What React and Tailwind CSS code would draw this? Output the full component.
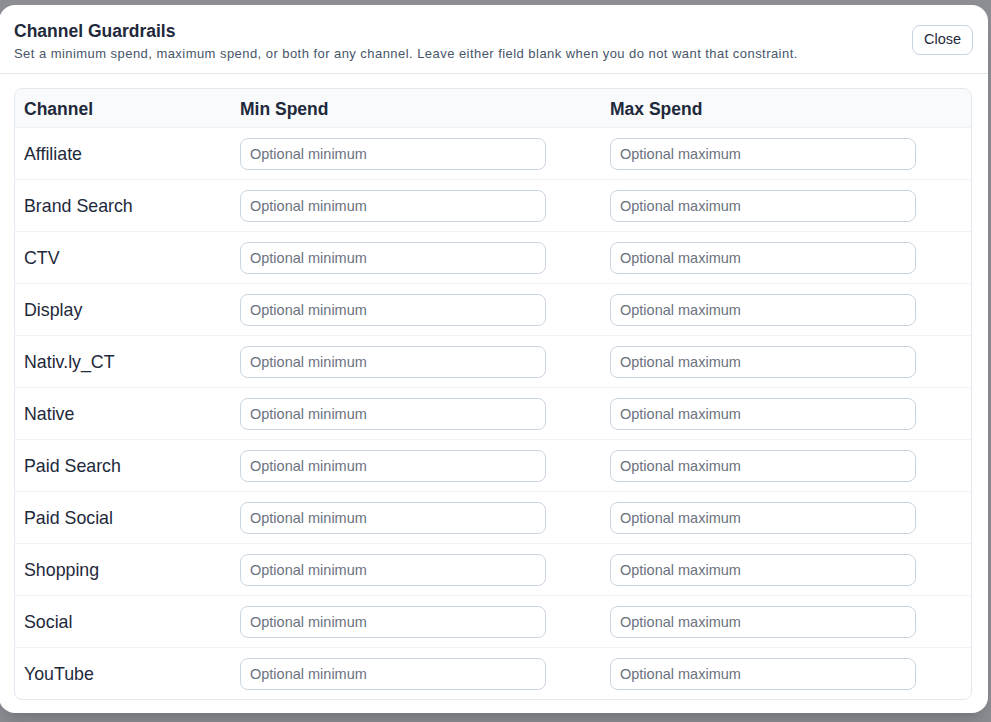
import React from 'react';

const channels = [
  'Affiliate',
  'Brand Search',
  'CTV',
  'Display',
  'Nativ.ly_CT',
  'Native',
  'Paid Search',
  'Paid Social',
  'Shopping',
  'Social',
  'YouTube',
];

export default function App() {
  return (
    <div
      className="h-[722px] w-[991px] overflow-hidden bg-[#8c8e94] pt-[5px]"
      style={{ fontFamily: '"Liberation Sans", Arial, sans-serif' }}
    >
      <div className="relative ml-[-1px] h-[708px] w-[989px] rounded-2xl bg-white shadow-xl">
        {/* Header */}
        <div className="flex h-[69px] items-start justify-between border-b border-[#e2e8f0] pl-[15px] pr-[15px] pt-[16px]">
          <div>
            <h2 className="text-[17.5px] font-bold leading-[20px] text-[#1e293b]">Channel Guardrails</h2>
            <p className="mt-[5px] text-[13px] leading-[16px] tracking-[0.45px] text-[#475569]">
              Set a minimum spend, maximum spend, or both for any channel. Leave either field blank when you do not want that constraint.
            </p>
          </div>
          <button className="mt-[4px] h-[30px] w-[61px] rounded-lg border border-[#cbd5e1] bg-white text-[14.5px] text-[#1e293b]">
            Close
          </button>
        </div>

        {/* Table */}
        <div className="ml-[15px] mt-[14px] w-[958px] overflow-hidden rounded-lg border border-[#e2e8f0]">
          <div className="grid h-[38px] grid-cols-[215px_370px_1fr] items-center bg-[#f8fafc] pt-[2px] text-[17.5px] font-bold text-[#1e293b]">
            <div className="px-[9px]">Channel</div>
            <div className="px-[10px]">Min Spend</div>
            <div className="px-[10px]">Max Spend</div>
          </div>
          {channels.map((name) => (
            <div
              key={name}
              className="grid h-[52px] grid-cols-[215px_370px_1fr] items-center border-t border-[#eef1f5] text-[17.8px] text-[#1e293b]"
            >
              <div className="px-[9px] pt-[2px]">{name}</div>
              <div className="px-[10px]">
                <input
                  type="text"
                  placeholder="Optional minimum"
                  className="h-[32px] w-[306px] rounded-lg border border-[#cbd5e1] bg-white px-[9px] text-[14.5px] text-[#1e293b] placeholder:text-[#6b7280] focus:outline-none"
                />
              </div>
              <div className="px-[10px]">
                <input
                  type="text"
                  placeholder="Optional maximum"
                  className="h-[32px] w-[306px] rounded-lg border border-[#cbd5e1] bg-white px-[9px] text-[14.5px] text-[#1e293b] placeholder:text-[#6b7280] focus:outline-none"
                />
              </div>
            </div>
          ))}
        </div>
      </div>
    </div>
  );
}
